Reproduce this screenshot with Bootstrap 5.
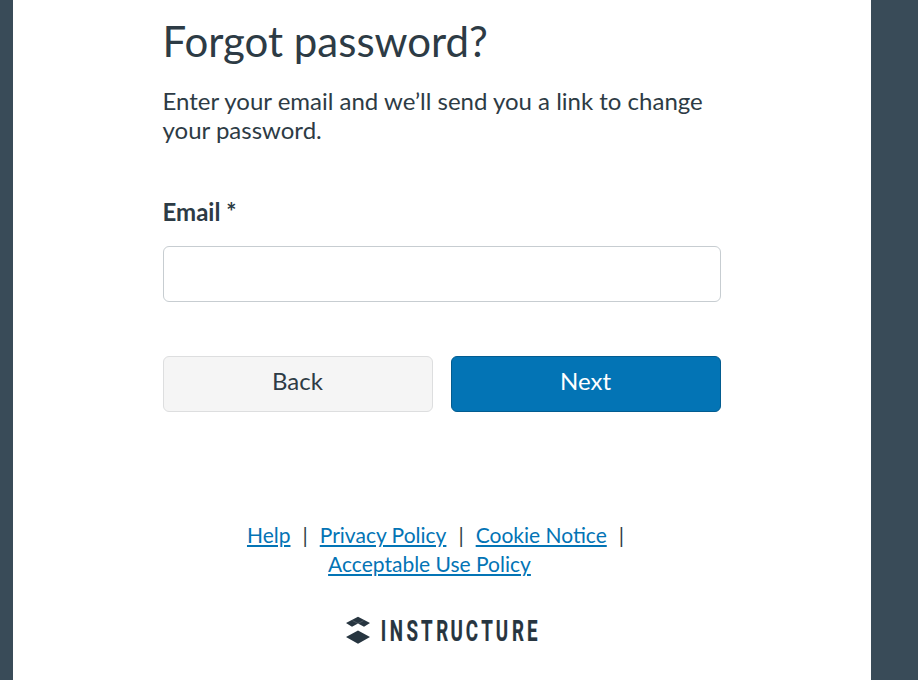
<!DOCTYPE html>
<html lang="en">
<head>
<meta charset="utf-8">
<meta name="viewport" content="width=device-width, initial-scale=1">
<title>Forgot password?</title>
<link href="https://cdn.jsdelivr.net/npm/bootstrap@5.3.0/dist/css/bootstrap.min.css" rel="stylesheet">
<style>
html, body { height: 100%; }
body { background: #394b58; color: #2d3b45; font-family: Lato, "Liberation Sans", sans-serif; font-size: 24px; line-height: 29px; overflow: hidden; }
.sheet { width: 858px; min-height: 680px; margin-left: 13px; background: #fff; padding: 16px 150px 0; }
.title { font-size: 42px; line-height: 50px; font-weight: 400; margin: 0 0 20px -.5px; }
.intro { margin: 0 0 53px -.5px; }
.field-label { font-weight: 700; margin: 0 0 20px -.5px; display: block; }
.email-box { height: 56px; border: 1px solid #c7cdd1; border-radius: 6px; margin-bottom: 54px; }
.actions { gap: 18px; margin-bottom: 108px; }
.action { height: 56px; border-radius: 6px; font-size: 24px; line-height: 29px; padding: 0 1px 7px 0; }
.action-back { --bs-btn-color: #2d3b45; --bs-btn-bg: #f5f5f5; --bs-btn-border-color: #dddedf; }
.action-next { --bs-btn-color: #fff; --bs-btn-bg: #0374b5; --bs-btn-border-color: #025c90; }
.links { font-size: 21px; line-height: 29px; margin-bottom: 38px; }
.links a { color: #0374b5; }
.entry { display: inline-flex; }
.bar { width: 29.25px; text-align: center; }
.entry:nth-child(3) { margin-right: 1px; }
.entry:last-child { margin-right: 25px; }
.brand { fill: #273540; }
.brand text { font-family: Roboto, sans-serif; font-weight: 700; font-size: 28.8px; text-anchor: middle; stroke: #273540; stroke-width: .2px; }
</style>
</head>
<body>
<main class="sheet">
  <h1 class="title">Forgot password?</h1>
  <p class="intro">Enter your email and we’ll send you a link to change your password.</p>
  <form>
    <label class="field-label" for="email">Email *</label>
    <input class="form-control email-box" id="email" type="email">
    <div class="d-flex actions">
      <button class="btn action action-back flex-fill w-50" type="button">Back</button>
      <button class="btn action action-next flex-fill w-50" type="button">Next</button>
    </div>
  </form>
  <footer class="text-center">
    <div class="links d-flex flex-wrap justify-content-center">
      <span class="entry"><a href="#">Help</a><span class="bar">|</span></span>
      <span class="entry"><a href="#">Privacy Policy</a><span class="bar">|</span></span>
      <span class="entry"><a href="#">Cookie Notice</a><span class="bar">|</span></span>
      <span class="entry"><a href="#">Acceptable Use Policy</a></span>
    </div>
    <svg class="brand d-block mx-auto overflow-visible" width="192" height="30" viewBox="0 0 192 30" role="img" aria-label="Instructure">
      <path d="M0 7 12 .8 24 7 18 10.800 12 7.500 6 10.800ZM0 21 12 14.500 24 21 12 27.700Z"/>
      <path d="M6.500 4.600 12 7.500 17.500 4.600" fill="none" stroke="#fff" stroke-opacity=".35" stroke-width=".5"/>
      <text transform="translate(0 24.700) scale(.65 1)" x="57.8 77.3 102.1 124.3 148 170.300 193.700 216.900 240 264.500 286.6">INSTRUCTURE</text>
    </svg>
  </footer>
</main>
<script src="https://cdn.jsdelivr.net/npm/bootstrap@5.3.0/dist/js/bootstrap.bundle.min.js"></script>
</body>
</html>
